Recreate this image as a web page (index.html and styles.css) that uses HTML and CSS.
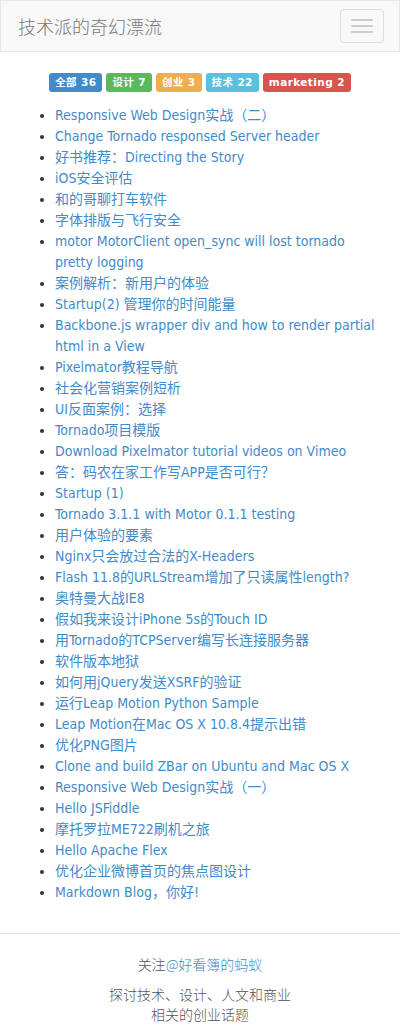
FILE: index.html
```html
<!DOCTYPE html>
<html lang="zh-CN">
<head>
<meta charset="utf-8">
<title>技术派的奇幻漂流</title>
<link rel="stylesheet" href="styles.css">
</head>
<body>
<nav class="navbar">
  <a class="brand" href="#">技术派的奇幻漂流</a>
  <button class="toggle" type="button"><span class="bar"></span><span class="bar"></span><span class="bar"></span></button>
</nav>
<main class="container">
  <div class="tags">
    <span class="label l-primary">全部 36</span>
    <span class="label l-success">设计 7</span>
    <span class="label l-warning">创业 3</span>
    <span class="label l-info">技术 22</span>
    <span class="label l-danger">marketing 2</span>
  </div>
  <ul class="posts">
    <li><a href="#">Responsive Web Design实战（二）</a></li>
    <li><a href="#">Change Tornado responsed Server header</a></li>
    <li><a href="#">好书推荐：Directing the Story</a></li>
    <li><a href="#">iOS安全评估</a></li>
    <li><a href="#">和的哥聊打车软件</a></li>
    <li><a href="#">字体排版与飞行安全</a></li>
    <li><a href="#">motor MotorClient open_sync will lost tornado pretty logging</a></li>
    <li><a href="#">案例解析：新用户的体验</a></li>
    <li><a href="#">Startup(2) 管理你的时间能量</a></li>
    <li><a href="#">Backbone.js wrapper div and how to render partial html in a View</a></li>
    <li><a href="#">Pixelmator教程导航</a></li>
    <li><a href="#">社会化营销案例短析</a></li>
    <li><a href="#">UI反面案例：选择</a></li>
    <li><a href="#">Tornado项目模版</a></li>
    <li><a href="#">Download Pixelmator tutorial videos on Vimeo</a></li>
    <li><a href="#">答：码农在家工作写APP是否可行？</a></li>
    <li><a href="#">Startup (1)</a></li>
    <li><a href="#">Tornado 3.1.1 with Motor 0.1.1 testing</a></li>
    <li><a href="#">用户体验的要素</a></li>
    <li><a href="#">Nginx只会放过合法的X-Headers</a></li>
    <li><a href="#">Flash 11.8的URLStream增加了只读属性length?</a></li>
    <li><a href="#">奥特曼大战IE8</a></li>
    <li><a href="#">假如我来设计iPhone 5s的Touch ID</a></li>
    <li><a href="#">用Tornado的TCPServer编写长连接服务器</a></li>
    <li><a href="#">软件版本地狱</a></li>
    <li><a href="#">如何用jQuery发送XSRF的验证</a></li>
    <li><a href="#">运行Leap Motion Python Sample</a></li>
    <li><a href="#">Leap Motion在Mac OS X 10.8.4提示出错</a></li>
    <li><a href="#">优化PNG图片</a></li>
    <li><a href="#">Clone and build ZBar on Ubuntu and Mac OS X</a></li>
    <li><a href="#">Responsive Web Design实战（一）</a></li>
    <li><a href="#">Hello JSFiddle</a></li>
    <li><a href="#">摩托罗拉ME722刷机之旅</a></li>
    <li><a href="#">Hello Apache Flex</a></li>
    <li><a href="#">优化企业微博首页的焦点图设计</a></li>
    <li><a href="#">Markdown Blog，你好!</a></li>
  </ul>
</main>
<footer class="footer">
  <p class="follow">关注<a href="#">@好看簿的蚂蚁</a></p>
  <p class="about">探讨技术、设计、人文和商业<br>相关的创业话题</p>
</footer>
</body>
</html>
```
FILE: styles.css
```css
* { box-sizing: border-box; }
html, body { margin: 0; padding: 0; }
body {
  font-family: "DejaVu Sans Condensed", "Noto Sans CJK SC", sans-serif;
  font-stretch: semi-condensed;
  font-size: 14px;
  line-height: 21px;
  color: #333;
  background: #fff;
}
a { color: #428bca; text-decoration: none; }

.navbar {
  display: flex;
  align-items: center;
  justify-content: space-between;
  height: 52px;
  padding: 0 15px 0 17px;
  background: #f8f8f8;
  border: 1px solid #e7e7e7;
}
.brand {
  font-family: "Noto Sans CJK SC", sans-serif;
  font-size: 18px;
  line-height: 20px;
  color: #777;
  font-weight: 300;
}
.toggle {
  display: flex;
  flex-direction: column;
  gap: 4px;
  width: 44px;
  height: 34px;
  padding: 9px 10px;
  justify-content: center;
  background: transparent;
  border: 1px solid #ddd;
  border-radius: 4px;
}
.bar {
  display: block;
  width: 22px;
  height: 2px;
  border-radius: 1px;
  background: #ccc;
}

.container { padding: 0 15px; }
.tags {
  display: flex;
  justify-content: center;
  gap: 4px;
  margin-top: 21px;
}
.label {
  display: inline-block;
  font-family: "DejaVu Sans", "Noto Sans CJK SC", sans-serif;
  font-stretch: normal;
  font-size: 10.5px;
  font-weight: bold;
  line-height: 11px;
  color: #fff;
  padding: 4px 6px 4px;
  border-radius: 3px;
  white-space: nowrap;
  letter-spacing: 0.4px;
}
.l-primary { background: #428bca; }
.l-success { background: #5cb85c; }
.l-warning { background: #f0ad4e; }
.l-info { background: #5bc0de; }
.l-danger { background: #d9534f; }

.posts {
  margin: 13px 0 30px;
  padding-left: 40px;
}

.footer {
  border-top: 1px solid #e5e5e5;
  padding: 20px 15px 0;
  text-align: center;
  font-family: "Noto Sans CJK SC", sans-serif;
  font-weight: 300;
  font-size: 14px;
  color: #555;
}
.footer p { margin: 0; }
.follow { margin-bottom: 9px !important; }
.about { line-height: 20px; }
```
